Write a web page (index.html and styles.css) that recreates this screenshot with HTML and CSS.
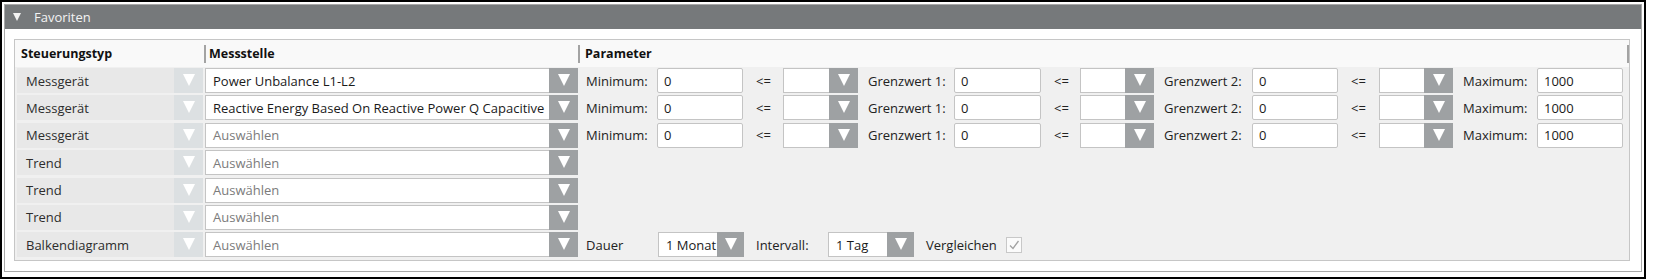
FILE: index.html
```html
<!DOCTYPE html>
<html lang="de">
<head>
<meta charset="utf-8">
<title>Favoriten</title>
<link rel="stylesheet" href="styles.css">
</head>
<body>
<div class="frame">
  <div class="group">
    <div class="group-head"><span class="caret"></span><span class="group-title">Favoriten</span></div>
    <div class="group-body">
      <div class="panel">
        <div class="panel-head">
          <div class="hcell h-type">Steuerungstyp</div>
          <div class="hcell h-point">Messstelle</div>
          <div class="hcell h-param">Parameter</div>
        </div>
        <div class="rows">
          <div class="row">
            <div class="combo combo-type"><span class="combo-text">Messgerät</span><span class="arrow"></span></div>
            <div class="combo combo-point"><span class="combo-text">Power Unbalance L1-L2</span><span class="arrow"></span></div>
            <div class="params">
              <span class="plabel first">Minimum:</span><span class="input">0</span><span class="op">&lt;=</span>
              <div class="combo combo-empty"><span class="combo-text"></span><span class="arrow"></span></div>
              <span class="plabel">Grenzwert 1:</span><span class="input">0</span><span class="op">&lt;=</span>
              <div class="combo combo-empty"><span class="combo-text"></span><span class="arrow"></span></div>
              <span class="plabel">Grenzwert 2:</span><span class="input">0</span><span class="op">&lt;=</span>
              <div class="combo combo-empty"><span class="combo-text"></span><span class="arrow"></span></div>
              <span class="plabel">Maximum:</span><span class="input">1000</span>
            </div>
          </div>
          <div class="row">
            <div class="combo combo-type"><span class="combo-text">Messgerät</span><span class="arrow"></span></div>
            <div class="combo combo-point"><span class="combo-text">Reactive Energy Based On Reactive Power Q Capacitive</span><span class="arrow"></span></div>
            <div class="params">
              <span class="plabel first">Minimum:</span><span class="input">0</span><span class="op">&lt;=</span>
              <div class="combo combo-empty"><span class="combo-text"></span><span class="arrow"></span></div>
              <span class="plabel">Grenzwert 1:</span><span class="input">0</span><span class="op">&lt;=</span>
              <div class="combo combo-empty"><span class="combo-text"></span><span class="arrow"></span></div>
              <span class="plabel">Grenzwert 2:</span><span class="input">0</span><span class="op">&lt;=</span>
              <div class="combo combo-empty"><span class="combo-text"></span><span class="arrow"></span></div>
              <span class="plabel">Maximum:</span><span class="input">1000</span>
            </div>
          </div>
          <div class="row">
            <div class="combo combo-type"><span class="combo-text">Messgerät</span><span class="arrow"></span></div>
            <div class="combo combo-point"><span class="combo-text placeholder">Auswählen</span><span class="arrow"></span></div>
            <div class="params">
              <span class="plabel first">Minimum:</span><span class="input">0</span><span class="op">&lt;=</span>
              <div class="combo combo-empty"><span class="combo-text"></span><span class="arrow"></span></div>
              <span class="plabel">Grenzwert 1:</span><span class="input">0</span><span class="op">&lt;=</span>
              <div class="combo combo-empty"><span class="combo-text"></span><span class="arrow"></span></div>
              <span class="plabel">Grenzwert 2:</span><span class="input">0</span><span class="op">&lt;=</span>
              <div class="combo combo-empty"><span class="combo-text"></span><span class="arrow"></span></div>
              <span class="plabel">Maximum:</span><span class="input">1000</span>
            </div>
          </div>
          <div class="row">
            <div class="combo combo-type"><span class="combo-text">Trend</span><span class="arrow"></span></div>
            <div class="combo combo-point"><span class="combo-text placeholder">Auswählen</span><span class="arrow"></span></div>
          </div>
          <div class="row">
            <div class="combo combo-type"><span class="combo-text">Trend</span><span class="arrow"></span></div>
            <div class="combo combo-point"><span class="combo-text placeholder">Auswählen</span><span class="arrow"></span></div>
          </div>
          <div class="row">
            <div class="combo combo-type"><span class="combo-text">Trend</span><span class="arrow"></span></div>
            <div class="combo combo-point"><span class="combo-text placeholder">Auswählen</span><span class="arrow"></span></div>
          </div>
          <div class="row">
            <div class="combo combo-type"><span class="combo-text">Balkendiagramm</span><span class="arrow"></span></div>
            <div class="combo combo-point"><span class="combo-text placeholder">Auswählen</span><span class="arrow"></span></div>
            <div class="bar-params">
              <span class="blabel b-dauer">Dauer</span>
              <div class="combo combo-period"><span class="combo-text">1 Monat</span><span class="arrow"></span></div>
              <span class="blabel b-int">Intervall:</span>
              <div class="combo combo-period"><span class="combo-text">1 Tag</span><span class="arrow"></span></div>
              <span class="blabel b-cmp">Vergleichen</span>
              <span class="checkbox"><svg width="14" height="14" viewBox="0 0 14 14"><polyline points="3,7.5 6,10.5 11.5,3" fill="none" stroke="#a2a2a2" stroke-width="1.3"/></svg></span>
            </div>
          </div>
        </div>
      </div>
    </div>
  </div>
</div>
</body>
</html>
```

FILE: styles.css
```css
* { box-sizing: border-box; }
html, body { margin: 0; padding: 0; background: #ffffff; }
body {
  font-family: "Open Sans", "Noto Sans", "DejaVu Sans", sans-serif;
  font-size: 13px;
  color: #222222;
}
.frame {
  width: 1646px;
  height: 279px;
  border: 2px solid #000000;
  padding: 2px;
  background: #ffffff;
}
.group {
  height: 268px;
  border: 1px solid #a9a9a9;
  display: flex;
  flex-direction: column;
}
.group-head {
  height: 24px;
  flex: none;
  background: #76797b;
  display: flex;
  align-items: center;
  padding-left: 8px;
  color: #f3f3f3;
}
.caret {
  width: 0;
  height: 0;
  border-left: 4.5px solid transparent;
  border-right: 4.5px solid transparent;
  border-top: 8px solid #f3f3f3;
  margin-right: 13px;
}
.group-title { font-size: 13px; line-height: 24px; }
.group-body {
  flex: 1;
  padding: 10px 11px 10px 9px;
  display: flex;
}
.panel {
  flex: 1;
  border: 1px solid #c6c6c6;
  display: flex;
  flex-direction: column;
  background: #f0f0f0;
}
.panel-head {
  height: 27px;
  flex: none;
  background: #f9f9f9;
  display: flex;
  align-items: center;
  font-weight: 700;
  font-size: 12.5px;
  color: #111111;
}
.hcell { height: 18px; line-height: 18px; white-space: nowrap; }
.h-type { width: 189px; padding-left: 6px; }
.h-point { width: 374px; border-left: 2px solid #a3a3a3; padding-left: 3px; }
.h-param { flex: 1; border-left: 2px solid #a3a3a3; border-right: 2px solid #a3a3a3; padding-left: 5px; }

.rows {
  flex: 1;
  padding: 1px 0 0 2px;
  display: flex;
  flex-direction: column;
  gap: 2.4px;
}
.row { display: flex; height: 25px; flex: none; }

.combo { display: flex; height: 25px; flex: none; }
.combo-text {
  flex: 1;
  min-width: 0;
  display: flex;
  align-items: center;
  white-space: nowrap;
  overflow: hidden;
}
.arrow {
  width: 29px;
  flex: none;
  display: flex;
  align-items: center;
  justify-content: center;
  background: #9ea1a3;
}
.arrow::after {
  content: "";
  width: 0;
  height: 0;
  margin-top: -1px;
  border-left: 6px solid transparent;
  border-right: 6px solid transparent;
  border-top: 12px solid #ffffff;
}

.combo-type { width: 186px; }
.combo-type .combo-text { background: #e8e8e8; padding-left: 9px; color: #2d2d2d; }
.combo-type .arrow { background: #dce0e2; }

.combo-point { width: 373px; margin-left: 2px; }
.combo-point .combo-text,
.combo-empty .combo-text,
.combo-period .combo-text {
  background: #ffffff;
  border: 1px solid #c4c4c4;
  border-right: none;
  padding-left: 7px;
  color: #1a1a1a;
}
.combo-text.placeholder { color: #7b7b7b; }

.params {
  margin-left: 8px;
  display: grid;
  grid-template-columns: 71px 86px 40px 75px 96px 87px 39px 74px 98px 86px 41px 74px 84px 86px;
  height: 25px;
}
.plabel { display: flex; align-items: center; padding-left: 10px; white-space: nowrap; color: #222; }
.plabel.first { padding-left: 0; }
.op { display: flex; align-items: center; padding-left: 13px; color: #222; }
.input {
  display: flex;
  align-items: center;
  padding-left: 6px;
  background: #ffffff;
  border: 1px solid #c4c4c4;
  border-radius: 2px;
  color: #1a1a1a;
}
.combo-empty { width: auto; }

.bar-params { margin-left: 8px; display: flex; height: 25px; align-items: center; }
.blabel { display: flex; align-items: center; height: 25px; white-space: nowrap; color: #222; }
.b-dauer { width: 72px; }
.b-int { width: 84px; padding-left: 12px; }
.b-cmp { width: 92px; padding-left: 12px; }
.combo-period { width: 86px; }
.combo-period .arrow { width: 27px; }
.checkbox {
  width: 16px;
  height: 16px;
  border: 1px solid #c8c8c8;
  background: #fbfbfb;
  display: flex;
  align-items: center;
  justify-content: center;
}
```
